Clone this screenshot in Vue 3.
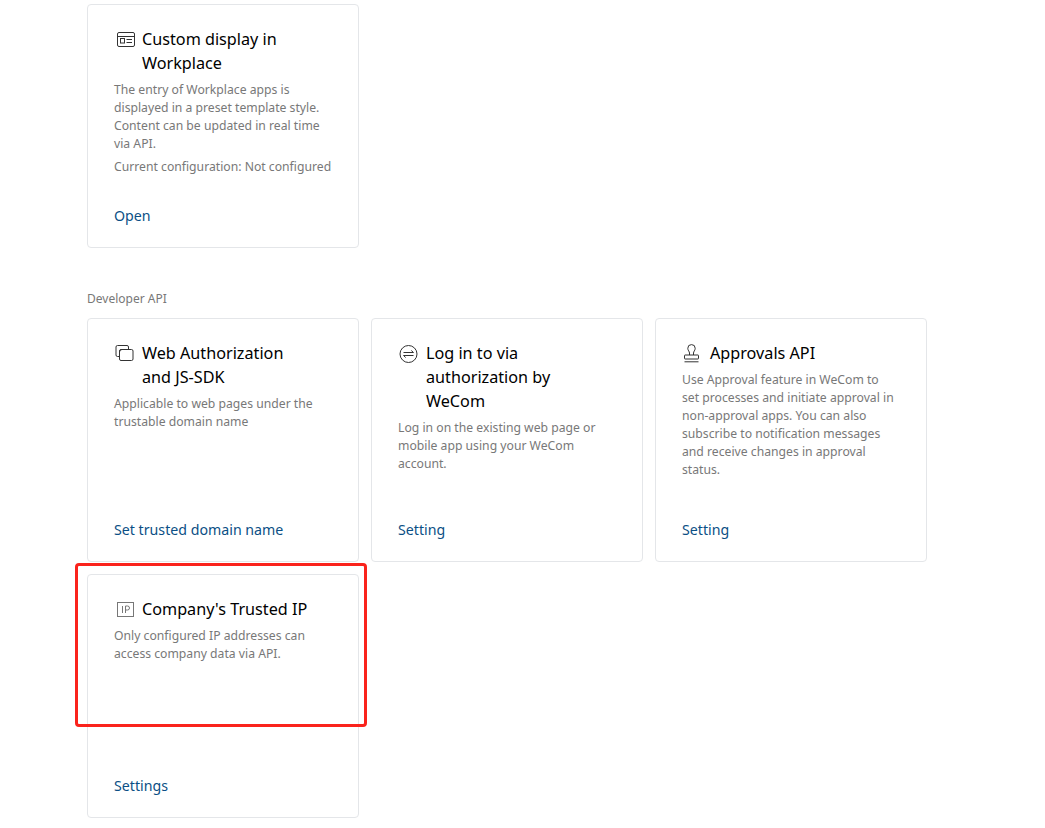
<script setup>
const first = [
  {
    title: 'Custom display in Workplace',
    icon: 'display',
    desc: ['The entry of Workplace apps is displayed in a preset template style. Content can be updated in real time via API.', 'Current configuration: Not configured'],
    link: 'Open'
  }
]
const api = [
  { title: 'Web Authorization and JS-SDK', icon: 'web', desc: ['Applicable to web pages under the trustable domain name'], link: 'Set trusted domain name' },
  { title: 'Log in to via authorization by WeCom', icon: 'login', desc: ['Log in on the existing web page or mobile app using your WeCom account.'], link: 'Setting' },
  { title: 'Approvals API', icon: 'stamp', desc: ['Use Approval feature in WeCom to\nset processes and initiate approval in non-approval apps. You can also subscribe to notification messages and receive changes in approval status.'], link: 'Setting' },
  { title: "Company's Trusted IP", icon: 'ip', desc: ['Only configured IP addresses can access company data via API.'], link: 'Settings', marked: true }
]
</script>

<template>
  <div class="page">
    <section class="grid">
      <article v-for="c in first" :key="c.title" class="card">
        <h3 class="title">
          <svg class="icon" viewBox="0 0 19 19" fill="none" stroke="#333" stroke-width="1">
            <rect x="1.500" y="2.500" width="17" height="14" rx="1.500" />
            <path d="M1.500 6.500h17" />
            <rect x="4.500" y="8.500" width="4" height="4.500" />
            <path d="M10.500 9.500h5.500M10.500 12.500h5.500" />
          </svg>
          <span>{{ c.title }}</span>
        </h3>
        <p v-for="d in c.desc" :key="d" class="desc">{{ d }}</p>
        <a class="link">{{ c.link }}</a>
      </article>
    </section>

    <div class="label">Developer API</div>

    <section class="grid">
      <article v-for="c in api" :key="c.title" class="card" :class="{ marked: c.marked }">
        <h3 class="title">
          <svg v-if="c.icon === 'web'" class="icon" viewBox="0 0 19 19" fill="none" stroke="#333" stroke-width="1">
            <path d="M12.500 5.500V3a1.500 1.500 0 0 0-1.500-1.500H1.500A1.500 1.500 0 0 0 0 3v8a1.500 1.500 0 0 0 1.500 1.500H3" />
            <rect x="3.500" y="5.500" width="13.500" height="11" rx="1.500" />
            <path d="M3.500 10.500V8a2.500 2.500 0 0 1 2.500-2.500" />
          </svg>
          <svg v-else-if="c.icon === 'login'" class="icon" viewBox="0 0 19 19" fill="none" stroke="#333" stroke-width="1">
            <circle cx="8.500" cy="10" r="8.500" />
            <path d="M3.500 8.500h10L11.300 6.500M13.500 11.500h-10l2.200 2" />
          </svg>
          <svg v-else-if="c.icon === 'stamp'" class="icon" viewBox="0 0 19 19" fill="none" stroke="#333" stroke-width="1">
            <path d="M5.500 11V9C5.500 7.500 3.800 6.500 3.800 4.300a3.700 3.700 0 0 1 7.400 0c0 2.200-1.700 3.200-1.700 4.700v2" />
            <rect x=".5" y="11" width="14" height="4" rx=".5" />
            <path d="M.5 17.800h14" />
          </svg>
          <svg v-else class="icon" viewBox="0 0 19 19" fill="none">
            <rect x="1.500" y="2.500" width="16" height="14" stroke="#777" />
            <path d="M6.500 6v7M9.500 13V6h2a2 2 0 0 1 0 4h-2" stroke="#777" />
          </svg>
          <span>{{ c.title }}</span>
        </h3>
        <p v-for="d in c.desc" :key="d" class="desc">{{ d }}</p>
        <a class="link">{{ c.link }}</a>
        <div v-if="c.marked" class="mark"></div>
      </article>
    </section>
  </div>
</template>

<style>
html, body { margin: 0; background: #fff; }
</style>

<style scoped>
.page {
  width: 1045px;
  height: 828px;
  box-sizing: border-box;
  padding: 4px 0 0 87px;
  overflow: hidden;
  font-family: "Noto Sans", "Open Sans", "Liberation Sans", sans-serif;
}
.grid {
  display: grid;
  grid-template-columns: repeat(3, 272px);
  grid-auto-rows: 244px;
  gap: 12px;
}
.card {
  position: relative;
  box-sizing: border-box;
  display: flex;
  flex-direction: column;
  padding: 22px 26px 19px;
  border: 1px solid #e4e6e9;
  border-radius: 4px;
  background: #fff;
}
.title {
  display: flex;
  align-items: flex-start;
  gap: 7px;
  margin: 0 24px 6px 2px;
  font-size: 16.2px;
  font-weight: 400;
  line-height: 24px;
  color: #000;
}
.icon {
  flex: none;
  width: 19px;
  height: 19px;
  margin-top: 3px;
  overflow: visible;
}
.desc {
  margin: 0 0 5px;
  font-size: 12.2px;
  line-height: 18px;
  color: #787878;
  white-space: pre-line;
}
.link {
  margin-top: auto;
  font-size: 14.2px;
  line-height: 24px;
  color: #0b4f85;
}
.label {
  margin: 42px 0 10px;
  font-size: 12px;
  line-height: 18px;
  color: #787878;
}
.mark {
  position: absolute;
  left: -13px;
  top: -12px;
  width: 292px;
  height: 164px;
  box-sizing: border-box;
  border: 3px solid #fa231c;
  border-radius: 4px;
  pointer-events: none;
}
</style>
